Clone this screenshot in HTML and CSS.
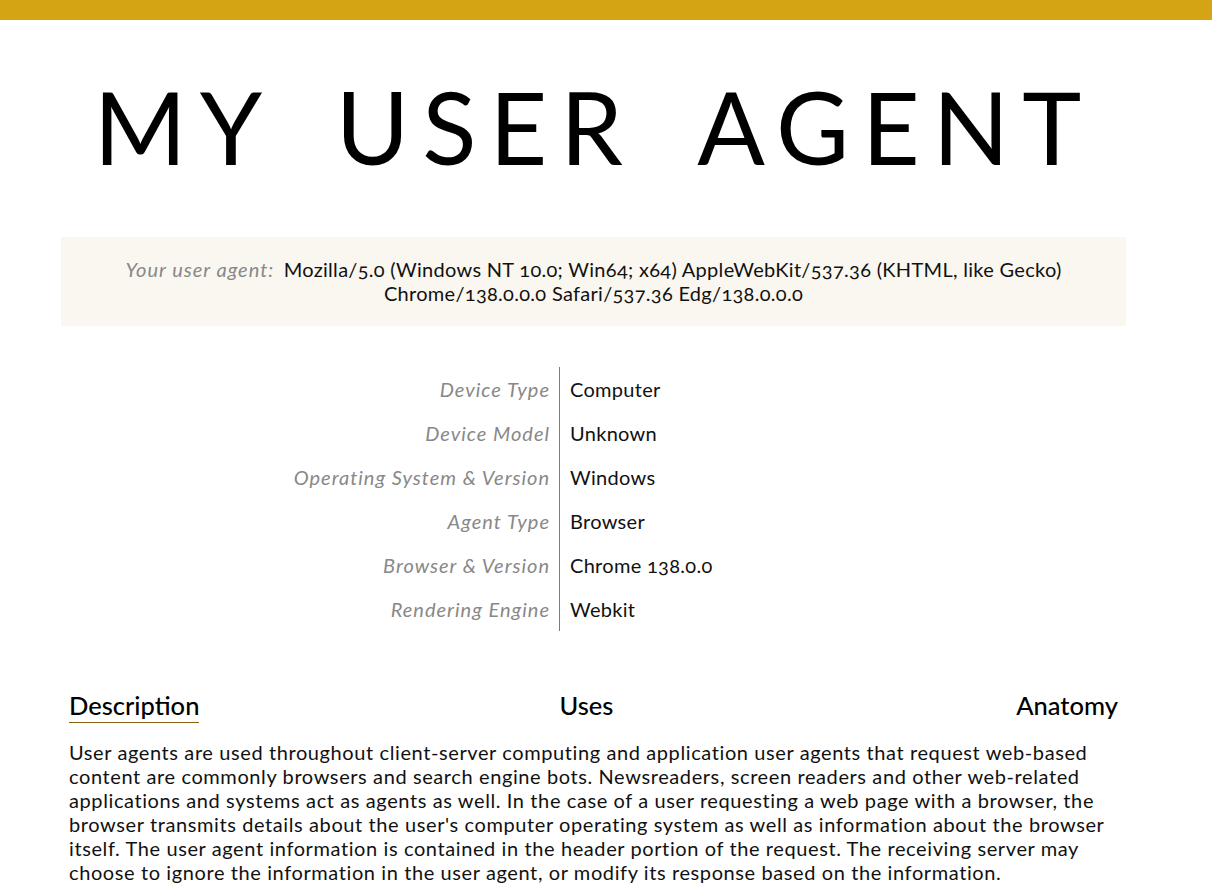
FILE: index.html
```html
<!DOCTYPE html>
<html lang="en">
<head>
  <meta charset="UTF-8" />
  <meta name="viewport" content="width=device-width, initial-scale=1.0" />
  <title>My User Agent</title>
  <link rel="stylesheet" href="styles.css">
</head>
<body>
  <div class="top-bar"></div>

  <div class="page">
    <h1 class="title">MY USER AGENT</h1>

    <div class="ua-box">
      <span class="ua-label">Your user agent:</span>
      Mozilla/5.0 (Windows NT 10.0; Win64; x64) AppleWebKit/537.36 (KHTML, like Gecko) Chrome/138.0.0.0 Safari/537.36 Edg/138.0.0.0
    </div>

    <div class="details">
      <div class="detail-label">Device Type</div>
      <div class="detail-value">Computer</div>
      <div class="detail-label">Device Model</div>
      <div class="detail-value">Unknown</div>
      <div class="detail-label">Operating System &amp; Version</div>
      <div class="detail-value">Windows</div>
      <div class="detail-label">Agent Type</div>
      <div class="detail-value">Browser</div>
      <div class="detail-label">Browser &amp; Version</div>
      <div class="detail-value">Chrome 138.0.0</div>
      <div class="detail-label">Rendering Engine</div>
      <div class="detail-value">Webkit</div>
    </div>

    <div class="tabs">
      <a href="#" class="tab active">Description</a>
      <a href="#" class="tab">Uses</a>
      <a href="#" class="tab">Anatomy</a>
    </div>

    <p class="tab-text">
      User agents are used throughout client-server computing and application user agents that request web-based
      content are commonly browsers and search engine bots. Newsreaders, screen readers and other web-related
      applications and systems act as agents as well. In the case of a user requesting a web page with a browser, the
      browser transmits details about the user's computer operating system as well as information about the browser
      itself. The user agent information is contained in the header portion of the request. The receiving server may
      choose to ignore the information in the user agent, or modify its response based on the information.
    </p>
  </div>
</body>
</html>
```

FILE: styles.css
```css
* {
  margin: 0;
  padding: 0;
  box-sizing: border-box;
}

body {
  font-family: 'Lato', 'Open Sans', sans-serif;
  font-variant-numeric: oldstyle-nums;
  color: #111;
  background: #fff;
}

.top-bar {
  height: 20px;
  background: #D4A414;
}

.page {
  width: 1065px;
  margin-left: 61px;
}

.title {
  font-weight: 400;
  font-size: 100px;
  line-height: 1;
  letter-spacing: 13px;
  word-spacing: 26px;
  text-align: center;
  padding: 56px 0 61px 1px;
  color: #000;
}

.ua-box {
  background: #FAF7F0;
  text-align: center;
  font-size: 20px;
  letter-spacing: 0.3px;
  line-height: 24px;
  padding: 20px 40px 21px;
}

.ua-label {
  color: #888;
  font-style: italic;
  letter-spacing: 1px;
  margin-right: 4px;
}

.details {
  display: grid;
  grid-template-columns: 499px 1fr;
  margin-top: 41px;
  font-size: 20px;
}

.detail-label,
.detail-value {
  height: 44px;
  display: flex;
  align-items: center;
}

.detail-label {
  justify-content: flex-end;
  padding-right: 9px;
  border-right: 1px solid #A8781A;
  color: #888;
  font-style: italic;
  letter-spacing: 1px;
}

.detail-value {
  padding-left: 10px;
  letter-spacing: 0.3px;
}

.tabs {
  display: grid;
  grid-template-columns: 1fr 1fr 1fr;
  margin: 59px 8px 0;
}

.tab {
  font-size: 25.5px;
  font-weight: 500;
  color: #000;
  text-decoration: none;
  justify-self: center;
  padding-bottom: 2px;
}

.tab:first-child {
  justify-self: start;
}

.tab:nth-child(2) {
  margin-right: 14px;
}

.tab:last-child {
  justify-self: end;
}

.tab.active {
  border-bottom: 1px solid #8B5E14;
}

.tab-text {
  margin: 17px 0 0 8px;
  font-size: 20px;
  letter-spacing: 0.6px;
  line-height: 24px;
  color: #111;
}
```
